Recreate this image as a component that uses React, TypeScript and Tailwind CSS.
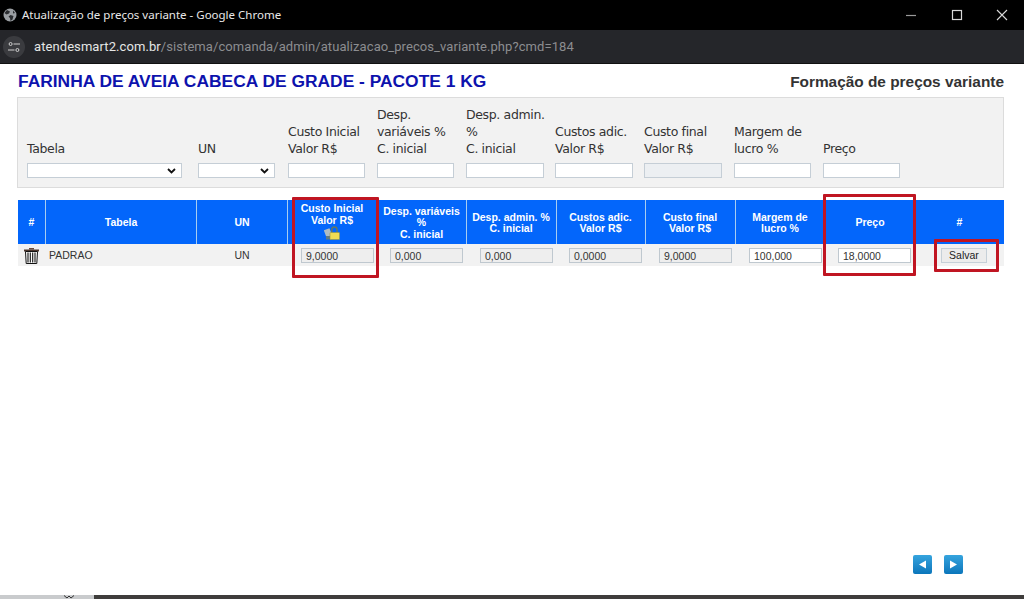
import React from "react";

const filters = [
  { w: "w-[155px]", mr: "mr-[16px]", label: ["Tabela"], select: true },
  { w: "w-[77px]", mr: "mr-[13px]", label: ["UN"], select: true },
  { w: "w-[77px]", mr: "mr-[12px]", label: ["Custo Inicial", "Valor R$"] },
  { w: "w-[77px]", mr: "mr-[12px]", label: ["Desp.", "variáveis %", "C. inicial"] },
  { w: "w-[78px]", mr: "mr-[11px]", label: ["Desp. admin.", "%", "C. inicial"] },
  { w: "w-[78px]", mr: "mr-[11px]", label: ["Custos adic.", "Valor R$"] },
  { w: "w-[78px]", mr: "mr-[12px]", label: ["Custo final", "Valor R$"], disabled: true },
  { w: "w-[77px]", mr: "mr-[12px]", label: ["Margem de", "lucro %"] },
  { w: "w-[77px]", mr: "mr-0", label: ["Preço"] },
];

const columns = [
  { w: "w-[27px]", label: ["#"] },
  { w: "w-[150px]", label: ["Tabela"] },
  { w: "w-[90px]", label: ["UN"] },
  { w: "w-[89px]", label: ["Custo Inicial", "Valor R$"], lock: true },
  { w: "w-[88px]", label: ["Desp. variáveis", "%", "C. inicial"] },
  { w: "w-[89px]", label: ["Desp. admin. %", "C. inicial"] },
  { w: "w-[88px]", label: ["Custos adic.", "Valor R$"] },
  { w: "w-[89px]", label: ["Custo final", "Valor R$"] },
  { w: "w-[89px]", label: ["Margem de", "lucro %"] },
  { w: "w-[89px]", label: ["Preço"] },
  { w: "w-[88px]", label: ["#"] },
];

const values = [
  { w: "w-[89px]", v: "9,0000" },
  { w: "w-[88px]", v: "0,000" },
  { w: "w-[89px]", v: "0,000" },
  { w: "w-[88px]", v: "0,0000" },
  { w: "w-[89px]", v: "9,0000" },
  { w: "w-[89px]", v: "100,000", on: true },
  { w: "w-[89px]", v: "18,0000", on: true, last: true },
];

function Trash() {
  return (
    <svg width="17" height="17" viewBox="0 0 17 17">
      <path d="M6 1h5v1.5H6z" fill="#6b4a3a" />
      <rect x="1" y="2.5" width="15" height="2" fill="#4a342c" />
      <path d="M2.5 4.5h12l-.7 12H3.2z" fill="#fff" stroke="#111" strokeWidth="1" />
      <path d="M5 5.5v10M7.3 5.5v10M9.7 5.5v10M12 5.5v10" stroke="#111" strokeWidth="1.1" />
    </svg>
  );
}

function Lock() {
  return (
    <svg width="16" height="14" viewBox="0 0 16 14">
      <rect x="1" y="3" width="6" height="8" fill="#aebcc4" transform="rotate(-20 4 7)" />
      <rect x="2" y="10" width="5" height="3.5" fill="#5f7a88" />
      <path d="M7.8 7V3.6a2.6 2.6 0 0 1 5.2 0V7" fill="none" stroke="#66785f" strokeWidth="1.4" />
      <rect x="6" y="6.5" width="9.5" height="7" rx="0.6" fill="#f1dc52" stroke="#9a9440" strokeWidth="0.6" />
    </svg>
  );
}

export default function App() {
  return (
    <div className="w-[1024px] h-[599px] flex flex-col overflow-hidden bg-white font-['Liberation_Sans',sans-serif]">
      <div className="h-[30px] bg-black flex items-center pl-[3px] text-[#e8e8e8]">
        <svg width="14" height="14" viewBox="0 0 14 14" className="mr-[5px]">
          <circle cx="7" cy="7" r="6.5" fill="#9a9ea2" />
          <path d="M4 2l3 1.5-1 2-2.5 1L1.5 5zM7.5 7l3 1-1 3.5-2 1.5-.5-3-1.5-1.5zM10 2.5l2 2.5-2 .5z" fill="#2b2d30" />
        </svg>
        <span className="text-[11.5px] font-['Noto_Sans',sans-serif]">Atualização de preços variante - Google Chrome</span>
        <div className="ml-auto flex items-center">
          <svg width="12" height="12" viewBox="0 0 12 12" className="mr-[34px]"><path d="M1 6.5h10" stroke="#9a9a9a" strokeWidth="1.2" /></svg>
          <svg width="12" height="12" viewBox="0 0 12 12" className="mr-[33px]"><rect x="1.5" y="1.5" width="9" height="9" fill="none" stroke="#d8d8d8" strokeWidth="1.2" /></svg>
          <svg width="12" height="12" viewBox="0 0 12 12" className="mr-[16px]"><path d="M1 1l10 10M11 1L1 11" stroke="#d8d8d8" strokeWidth="1.1" /></svg>
        </div>
      </div>
      <div className="h-[34px] bg-[#25262a] flex items-center pl-[3px] border-b border-[#111]">
        <div className="w-[22px] h-[22px] mr-[9px] rounded-full bg-[#3a3b3f] flex items-center justify-center">
          <svg width="12" height="12" viewBox="0 0 12 12">
            <circle cx="2.6" cy="3" r="1.5" fill="none" stroke="#d0d0d0" strokeWidth="1" />
            <path d="M5.5 3H12M0 9h6.5" stroke="#d0d0d0" strokeWidth="1.2" />
            <circle cx="9.4" cy="9" r="1.5" fill="none" stroke="#d0d0d0" strokeWidth="1" />
          </svg>
        </div>
        <span className="text-[13px] tracking-[0.08px] font-['Roboto',sans-serif] text-[#e6e6e6]">
          atendesmart2.com.br<span className="text-[#8c8d90]">/sistema/comanda/admin/atualizacao_precos_variante.php?cmd=184</span>
        </span>
      </div>

      <main className="flex-1 relative pl-[17px] pr-[20px]">
        <div className="flex items-center justify-between h-[33px] pl-px pt-[2px]">
          <h1 className="text-[17.4px] font-bold text-[#0d12ad]">FARINHA DE AVEIA CABECA DE GRADE - PACOTE 1 KG</h1>
          <h2 className="text-[15.4px] font-bold text-[#333]">Formação de preços variante</h2>
        </div>

        <section className="h-[91px] bg-[#f2f2f2] border border-[#dcdcdc] flex items-end pl-[9px] pb-[9px]">
          {filters.map((f, i) => (
            <div key={i} className={`${f.w} ${f.mr} shrink-0`}>
              <div className="text-[12.5px] leading-[17px] text-[#333] mb-[6px] whitespace-nowrap font-['DejaVu_Sans',sans-serif] tracking-[-0.35px]">
                {f.label.map((l) => <div key={l}>{l}</div>)}
              </div>
              {f.select ? (
                <div className="h-[15px] bg-white border border-[#c5ced6] flex items-center justify-end pr-[5px]">
                  <svg width="9" height="6" viewBox="0 0 9 6"><path d="M1 1l3.5 3.5L8 1" fill="none" stroke="#111" strokeWidth="1.8" /></svg>
                </div>
              ) : (
                <div className={`h-[15px] border border-[#c5ced6] ${f.disabled ? "bg-[#eceff2]" : "bg-white"}`} />
              )}
            </div>
          ))}
        </section>

        <div className="mt-[12px] ml-px relative">
          <div className="flex h-[44px] gap-px bg-[#a8cdf0]">
            {columns.map((c, i) => (
              <div key={i} className={`${c.w} shrink-0 bg-[#0366fb] flex flex-col items-center justify-center text-white font-bold text-[10.5px] leading-[11.5px] text-center whitespace-nowrap ${c.lock ? "pb-[1px]" : "pt-[2px]"} ${i >= 3 ? "pr-[1px]" : ""}`}>
                {c.label.map((l, j) => <div key={j}>{l}</div>)}
                {c.lock && <div className="h-[14px]"><Lock /></div>}
              </div>
            ))}
          </div>
          <div className="flex h-[22px] bg-[#f2f2f2] text-[10.5px] text-[#333] items-center gap-px">
            <div className="w-[27px] shrink-0 flex justify-center"><Trash /></div>
            <div className="w-[150px] shrink-0 pl-[3px] pt-[1px]">PADRAO</div>
            <div className="w-[90px] shrink-0 text-center pt-[1px]">UN</div>
            {values.map((v, i) => (
              <div key={i} className={`${v.w} shrink-0 flex justify-end ${v.last ? "pr-[4px]" : "pr-[3px]"}`}>
                <div className={`w-[73px] h-[15px] border border-[#bfc8cf] pl-[4px] leading-[14px] ${v.on ? "bg-white" : "bg-[#eeeeee]"}`}>{v.v}</div>
              </div>
            ))}
            <div className="w-[88px] shrink-0 flex justify-center">
              <button className="w-[46px] h-[15px] ml-[8px] bg-[#ececec] border border-[#c6d0d8] text-[10.5px] leading-[13px] text-[#222]">Salvar</button>
            </div>
          </div>
          <div className="absolute left-[274px] top-[-3px] w-[87px] h-[81px] border-[3px] border-[#c01522] rounded-[1px]" />
          <div className="absolute left-[805px] top-[-6px] w-[93px] h-[82px] border-[3px] border-[#c01522] rounded-[1px]" />
          <div className="absolute left-[916px] top-[39px] w-[65px] h-[33px] border-[3px] border-[#c01522] rounded-[1px]" />
        </div>

        <div className="absolute right-[61px] bottom-[21px] flex gap-[12px]">
          <button className="w-[19px] h-[19px] rounded-[2px] bg-gradient-to-b from-[#35a4de] to-[#0a76bb] flex items-center justify-center">
            <svg width="9" height="9" viewBox="0 0 9 9"><path d="M8 0.5v8L1 4.5z" fill="#fff" /></svg>
          </button>
          <button className="w-[19px] h-[19px] rounded-[2px] bg-gradient-to-b from-[#35a4de] to-[#0a76bb] flex items-center justify-center">
            <svg width="9" height="9" viewBox="0 0 9 9"><path d="M1 0.5v8L8 4.5z" fill="#fff" /></svg>
          </button>
        </div>
      </main>

      <div className="h-[4px] flex">
        <div className="w-[94px] bg-[#c9cbcd] relative">
          <svg width="12" height="4" viewBox="0 0 12 4" className="absolute left-[63px] top-0"><path d="M1 0.5l3 2.5 2-2 2 2 3-2.5" fill="none" stroke="#333" strokeWidth="1" /></svg>
        </div>
        <div className="flex-1 bg-[#3f3d3c]" />
      </div>
    </div>
  );
}
